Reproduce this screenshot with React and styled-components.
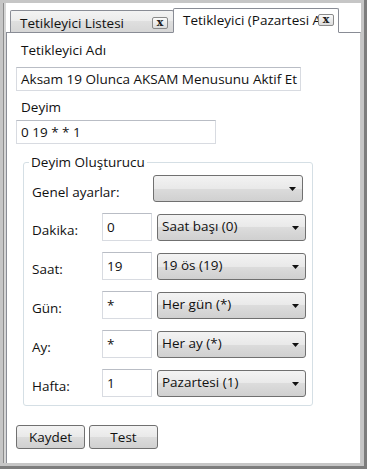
import React from 'react'
import styled, { createGlobalStyle } from 'styled-components'

const GlobalStyle = createGlobalStyle`
  body {
    margin: 0;
    font-family: "Open Sans", "Noto Sans", sans-serif;
    font-size: 13.5px;
    color: #111;
    background: #fff;
  }
`

const Frame = styled.div`
  width: 367px;
  height: 469px;
  box-sizing: border-box;
  background: #c6c6c6;
  padding: 3px;
  border-right: 3px solid #7d7d7d;
  border-bottom: 3px solid #7d7d7d;
`

const Window = styled.div`
  height: 100%;
  box-sizing: border-box;
  background: #fff;
  border-left: 1px solid #8c8c8c;
  box-shadow: inset 2px 0 0 #d6d6d6;
  padding-left: 2px;
  display: flex;
  flex-direction: column;
`

const TabStrip = styled.div`
  height: 29px;
  display: flex;
  align-items: flex-end;
  padding-left: 4px;
  position: relative;
  z-index: 1;
`

const Tab = styled.div`
  box-sizing: border-box;
  width: ${(p) => p.$width}px;
  height: ${(p) => (p.$active ? 25 : 22)}px;
  margin-left: ${(p) => (p.$active ? -1 : 0)}px;
  margin-bottom: ${(p) => (p.$active ? -1 : 0)}px;
  border: 1px solid #898c95;
  border-bottom: ${(p) => (p.$active ? '1px solid #fff' : '0')};
  border-radius: 2px 2px 0 0;
  background: ${(p) =>
    p.$active ? '#fff' : 'linear-gradient(#f3f3f3, #ebebeb 50%, #dfdfdf 50%, #d6d6d6)'};
  display: flex;
  align-items: center;
  padding: ${(p) => (p.$active ? '0 4px 2px 9px' : '2px 5px 0 9px')};
`

const TabLabel = styled.span`
  flex: 1;
  min-width: 0;
  white-space: nowrap;
  line-height: 18px;
`

const CloseButton = styled.span`
  flex: none;
  box-sizing: border-box;
  width: 16px;
  height: 12px;
  border: 1px solid #8a8a8a;
  border-radius: 2px;
  background: linear-gradient(#fbfbfb, #dcdcdc);
  font-family: "DejaVu Serif", "Liberation Serif", serif;
  font-weight: bold;
  font-size: 11px;
  line-height: 9px;
  text-align: center;
  color: #222;
`

const Panel = styled.div`
  flex: 1;
  border: 1px solid #898c95;
  border-right-color: #c9c9c9;
  border-bottom: 0;
  padding: 8px 0 0 9px;
  display: flex;
  flex-direction: column;
  align-items: flex-start;
`

const FieldLabel = styled.div`
  padding-left: 5px;
  line-height: 18px;
  margin-top: ${(p) => p.$top || 0}px;
`

const TextBox = styled.div`
  box-sizing: border-box;
  width: ${(p) => p.$width}px;
  height: ${(p) => p.$height || 24}px;
  margin-top: ${(p) => p.$top || 0}px;
  border: 1px solid #d8dbe1;
  border-top-color: #b9bdc5;
  padding: 0 4px;
  display: flex;
  align-items: center;
  white-space: nowrap;
  background: #fff;
`

const Group = styled.fieldset`
  margin: 9px 0 0 7px;
  width: 290px;
  box-sizing: border-box;
  border: 1px solid #d5dfe5;
  border-radius: 3px;
  padding: 0 0 8px 5px;
`

const Legend = styled.legend`
  padding: 0 2px;
  line-height: 18px;
`

const Rows = styled.div`
  display: flex;
  flex-direction: column;
  gap: 11px;
  padding: 4px 0 0 3px;
`

const Row = styled.div`
  display: grid;
  grid-template-columns: ${(p) => p.$cols};
  align-items: center;
  height: ${(p) => p.$height}px;
`

const RowLabel = styled.span`
  padding-top: 6px;
  line-height: 18px;
`

const Combo = styled.div`
  box-sizing: border-box;
  height: 27px;
  margin-left: ${(p) => p.$offset || 0}px;
  border: 1px solid #707070;
  border-radius: 3px;
  background: linear-gradient(#f3f3f3, #e9e9e9 50%, #dcdcdc 50%, #d0d0d0);
  display: flex;
  align-items: center;
  padding: 0 6px 2px 4px;
  justify-content: space-between;
`

const Arrow = () => (
  <svg width="7" height="4" viewBox="0 0 7 4" style={{ marginTop: 3 }}>
    <path d="M0 0 H7 L3.5 4 Z" fill="#111" />
  </svg>
)

const Buttons = styled.div`
  display: flex;
  gap: 4px;
  margin-top: 19px;
`

const Button = styled.div`
  box-sizing: border-box;
  width: 69px;
  height: 24px;
  border: 1px solid #707070;
  border-radius: 3px;
  background: linear-gradient(#f3f3f3, #e9e9e9 50%, #dcdcdc 50%, #d0d0d0);
  display: flex;
  align-items: center;
  justify-content: center;
  padding-bottom: 1px;
`

const fields = [
  { label: 'Dakika:', value: '0', option: 'Saat başı (0)' },
  { label: 'Saat:', value: '19', option: '19 ös (19)' },
  { label: 'Gün:', value: '*', option: 'Her gün (*)' },
  { label: 'Ay:', value: '*', option: 'Her ay (*)' },
  { label: 'Hafta:', value: '1', option: 'Pazartesi (1)' },
]

export default function App() {
  return (
    <>
      <GlobalStyle />
      <Frame>
        <Window>
          <TabStrip>
            <Tab $width={164}>
              <TabLabel>Tetikleyici Listesi</TabLabel>
              <CloseButton>x</CloseButton>
            </Tab>
            <Tab $width={166} $active>
              <TabLabel>Tetikleyici (Pazartesi A</TabLabel>
              <CloseButton>x</CloseButton>
            </Tab>
          </TabStrip>
          <Panel>
            <FieldLabel>Tetikleyici Adı</FieldLabel>
            <TextBox $width={285} $top={8}>
              Aksam 19 Olunca AKSAM Menusunu Aktif Et
            </TextBox>
            <FieldLabel $top={7}>Deyim</FieldLabel>
            <TextBox $width={200} $top={4}>
              0 19 * * 1
            </TextBox>
            <Group>
              <Legend>Deyim Oluşturucu</Legend>
              <Rows>
                <Row $cols="121px 150px" $height={27}>
                  <RowLabel>Genel ayarlar:</RowLabel>
                  <Combo>
                    <span />
                    <Arrow />
                  </Combo>
                </Row>
                {fields.map((f) => (
                  <Row key={f.label} $cols="70px 50px 154px" $height={28}>
                    <RowLabel>{f.label}</RowLabel>
                    <TextBox $width={50} $height={28}>
                      {f.value}
                    </TextBox>
                    <Combo $offset={5}>
                      <span>{f.option}</span>
                      <Arrow />
                    </Combo>
                  </Row>
                ))}
              </Rows>
            </Group>
            <Buttons>
              <Button>Kaydet</Button>
              <Button>Test</Button>
            </Buttons>
          </Panel>
        </Window>
      </Frame>
    </>
  )
}
